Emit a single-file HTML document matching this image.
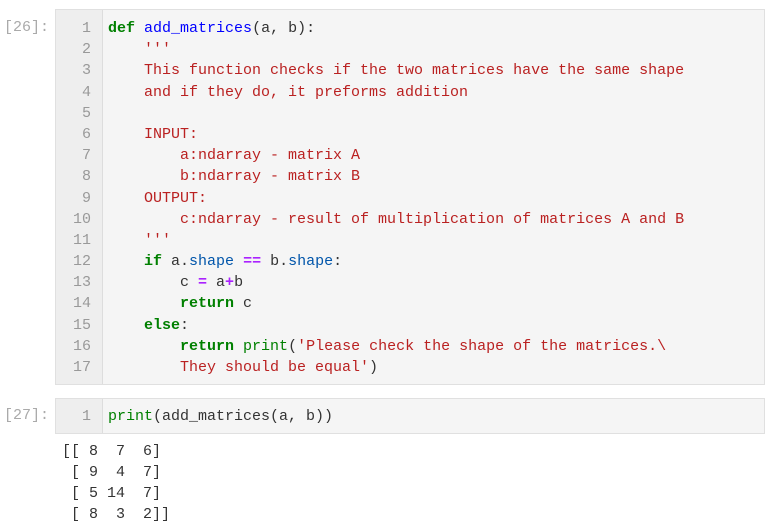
<!DOCTYPE html>
<html><head><style>
body{margin:0;background:#fff;width:780px;height:530px;overflow:hidden;font-family:"Liberation Mono",monospace;font-size:15px;color:#333;position:relative}
.p{position:absolute;left:4px;color:#aaa;font-size:15px}
.cell{position:absolute;left:55px;width:710px;background:#f5f5f5;border:1px solid #e0e0e0;box-sizing:border-box}
.g{position:absolute;left:0;top:0;bottom:0;width:47px;background:#eee;border-right:1px solid #ddd;box-sizing:border-box}
.ln{position:absolute;right:10px;width:30px;text-align:right;color:#999}
.code{position:absolute;left:52px}
.l{height:21.2px;line-height:21.2px;white-space:pre}
.k{color:#008000;font-weight:bold}
.f{color:#0000ff}
.s{color:#ba2121}
.o{color:#aa22ff;font-weight:bold}
.a{color:#0055aa}
.b{color:#008000}
.out{position:absolute;left:62px;top:441px;white-space:pre;line-height:21px}
</style></head><body>
<div class="p" style="top:19px">[26]:</div>
<div class="cell" style="top:9px;height:376px">
<div class="g"></div>
<div class="ln" style="top:8px;left:5px">
<div class="l">1</div><div class="l">2</div><div class="l">3</div><div class="l">4</div><div class="l">5</div><div class="l">6</div><div class="l">7</div><div class="l">8</div><div class="l">9</div><div class="l">10</div><div class="l">11</div><div class="l">12</div><div class="l">13</div><div class="l">14</div><div class="l">15</div><div class="l">16</div><div class="l">17</div>
</div>
<div class="code" style="top:8px">
<div class="l"><span class="k">def</span> <span class="f">add_matrices</span>(a, b):</div>
<div class="l s">    '''</div>
<div class="l s">    This function checks if the two matrices have the same shape</div>
<div class="l s">    and if they do, it preforms addition</div>
<div class="l s"> </div>
<div class="l s">    INPUT:</div>
<div class="l s">        a:ndarray - matrix A</div>
<div class="l s">        b:ndarray - matrix B</div>
<div class="l s">    OUTPUT:</div>
<div class="l s">        c:ndarray - result of multiplication of matrices A and B</div>
<div class="l s">    '''</div>
<div class="l">    <span class="k">if</span> a.<span class="a">shape</span> <span class="o">==</span> b.<span class="a">shape</span>:</div>
<div class="l">        c <span class="o">=</span> a<span class="o">+</span>b</div>
<div class="l">        <span class="k">return</span> c</div>
<div class="l">    <span class="k">else</span>:</div>
<div class="l">        <span class="k">return</span> <span class="b">print</span>(<span class="s">'Please check the shape of the matrices.\</span></div>
<div class="l"><span class="s">        They should be equal'</span>)</div>
</div>
</div>
<div class="p" style="top:407px">[27]:</div>
<div class="cell" style="top:398px;height:36px">
<div class="g"></div>
<div class="ln" style="top:7px;left:5px"><div class="l">1</div></div>
<div class="code" style="top:7px"><div class="l"><span class="b">print</span>(add_matrices(a, b))</div></div>
</div>
<div class="out">[[ 8  7  6]
 [ 9  4  7]
 [ 5 14  7]
 [ 8  3  2]]</div>
</body></html>
